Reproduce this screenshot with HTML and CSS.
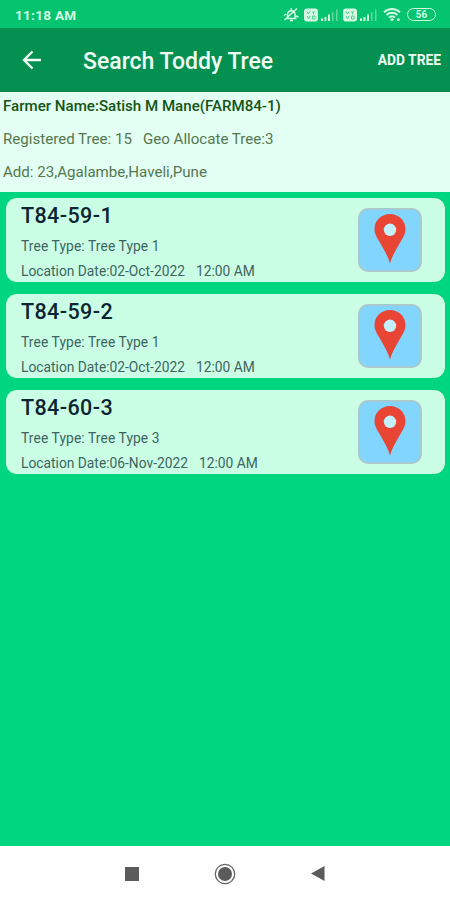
FILE: index.html
```html
<!DOCTYPE html>
<html lang="en">
<head>
  <meta charset="UTF-8">
  <title>Search Toddy Tree</title>
  <link rel="stylesheet" href="styles.css">
</head>
<body>
  <svg width="0" height="0" class="defs">
    <symbol id="pin" viewBox="0 0 32 50">
      <path fill="#e94535" d="M16 0C7.500 0 .5 6.600 .5 15c0 6 3.500 10 6.500 15.500 4 7 7 12 9 19 2-7 5-12 9-19 3-5.500 6.500-9.500 6.500-15.500C31.500 6.600 24.500 0 16 0z"/>
      <circle cx="16" cy="15.800" r="6.200" fill="#c4effc"/>
    </symbol>
    <symbol id="sim" viewBox="0 0 35 14">
      <rect x="0" y="0.500" width="14" height="13" rx="3" fill="#d5f9e2"/>
      <path d="M3 3.500l1.500 2.500L6 3.500M8 4h3M9.500 4v2.500M3 8l1.500 3L6 8M8.500 8v3h2.500V8z" fill="none" stroke="#4dd393" stroke-width="1"/>
      <path d="M17 10.500h2V13h-2zM20.500 9h2v4h-2zM24 6.500h2V13h-2z" fill="#d5f9e2"/>
      <path d="M28 4h1.500v9H28zM32 1.500h1.500V13H32z" fill="#5fdb9c"/>
    </symbol>
  </svg>

  <div class="statusbar">
    <span class="clock">11:18 AM</span>
    <div class="status-icons">
      <svg class="bell" width="16" height="15" viewBox="0 0 16 15" fill="none" stroke="#d5f9e2" stroke-width="1.500">
        <path d="M3 11.500h10.500M4.500 11V7a3.800 3.800 0 0 1 7.500 0v4M8.300 1v2M7 13.500h3M1.500 13L14 1.500M1 8.500l2-1.500M13 9l2.500 1"/>
      </svg>
      <svg class="sim" width="35" height="14"><use href="#sim"/></svg>
      <svg class="sim" width="35" height="14"><use href="#sim"/></svg>
      <svg class="wifi" width="18" height="15" viewBox="0 0 18 15" fill="none" stroke="#d5f9e2" stroke-width="2">
        <path d="M1 5.200a11.500 11.500 0 0 1 16 0M3.500 8a8 8 0 0 1 11 0M6 10.600a4.500 4.500 0 0 1 6 0"/>
        <path d="M9 14.500l-2-2.300a3 3 0 0 1 4 0zM14 11.500h2.500V14H14z" fill="#d5f9e2" stroke="none"/>
      </svg>
      <span class="battery">56</span>
    </div>
  </div>

  <div class="toolbar">
    <svg class="back" width="20" height="20" viewBox="0 0 20 20" fill="none" stroke="#effdf3" stroke-width="2.400">
      <path d="M19 10H2M10.500 1.500L2 10l8.500 8.500"/>
    </svg>
    <h1>Search Toddy Tree</h1>
    <span class="add">ADD TREE</span>
  </div>

  <div class="farmer">
    <p class="name">Farmer Name:Satish M Mane(FARM84-1)</p>
    <p class="count"><span>Registered Tree: 15</span><span>Geo Allocate Tree:3</span></p>
    <p class="address">Add: 23,Agalambe,Haveli,Pune</p>
  </div>

  <div class="list">
    <div class="card">
      <div class="info">
        <h2>T84-59-1</h2>
        <p class="type">Tree Type: Tree Type 1</p>
        <p class="date"><span>Location Date:02-Oct-2022</span><span>12:00 AM</span></p>
      </div>
      <div class="map"><svg width="32" height="50"><use href="#pin"/></svg></div>
    </div>
    <div class="card">
      <div class="info">
        <h2>T84-59-2</h2>
        <p class="type">Tree Type: Tree Type 1</p>
        <p class="date"><span>Location Date:02-Oct-2022</span><span>12:00 AM</span></p>
      </div>
      <div class="map"><svg width="32" height="50"><use href="#pin"/></svg></div>
    </div>
    <div class="card">
      <div class="info">
        <h2>T84-60-3</h2>
        <p class="type">Tree Type: Tree Type 3</p>
        <p class="date"><span>Location Date:06-Nov-2022</span><span>12:00 AM</span></p>
      </div>
      <div class="map"><svg width="32" height="50"><use href="#pin"/></svg></div>
    </div>
  </div>

  <div class="navbar">
    <svg width="14" height="14"><rect width="14" height="14" fill="#5b5b5b"/></svg>
    <svg width="22" height="22"><circle cx="11" cy="11" r="9.700" fill="none" stroke="#666" stroke-width="1.300"/><circle cx="11" cy="11" r="7" fill="#5b5b5b"/></svg>
    <svg width="14" height="15"><path d="M13.500 0v15L0 7.500z" fill="#5b5b5b"/></svg>
  </div>
</body>
</html>
```
FILE: styles.css
```css
* { box-sizing: border-box; margin: 0; padding: 0; }
body { width: 450px; height: 900px; display: flex; flex-direction: column; overflow: hidden; font-family: Roboto, sans-serif; background: #00d67f; }
svg { display: block; }
.defs { position: absolute; }

.statusbar { height: 28px; display: flex; align-items: center; justify-content: space-between; padding: 1px 14px 0 15px; background: #04c46f; color: #d5f9e2; }
.clock { font-size: 13.500px; font-weight: 700; line-height: 16px; letter-spacing: 0.300px; }
.status-icons { display: flex; align-items: center; }
.bell { margin-right: 5px; }
.sim { margin-right: 4px; }
.wifi { margin: 0 6px 0 1px; }
.battery { width: 29px; height: 13px; border: 1.500px solid #d5f9e2; border-radius: 7px; font-size: 10px; font-weight: 700; line-height: 11px; text-align: center; }

.toolbar { height: 64px; display: flex; align-items: center; padding: 0 9px 0 22px; background: #039050; border-bottom: 1px solid #067f43; color: #effdf3; }
.back { margin-right: 41px; }
h1 { flex: 1; font-size: 23px; font-weight: 500; line-height: 28px; padding-top: 4px; }
.add { font-size: 13.800px; font-weight: 700; line-height: 18px; padding-top: 1px; }

.farmer { height: 100px; padding: 4px 3px 0; background: #e3fff3; color: #55774f; font-size: 15.100px; }
.farmer p { height: 33px; line-height: 21px; white-space: nowrap; }
.farmer .name { color: #145414; font-size: 15.100px; font-weight: 500; }
.count span + span { margin-left: 11px; }

.list { flex: 1; padding: 5.600px 5px 0 6px; }
.card { height: 84px; margin-bottom: 12.200px; display: flex; justify-content: space-between; padding: 0 23px 0 15px; background: #caffe6; border-radius: 11px; }
.card h2 { margin-top: 5px; font-size: 21.500px; font-weight: 500; line-height: 26px; letter-spacing: 0.400px; color: #0c2530; }
.info p { font-size: 13.800px; line-height: 18px; color: #3d6460; white-space: nowrap; }
.info .type { margin-top: 8px; letter-spacing: 0.100px; }
.info .date { margin-top: 7px; }
.date span + span { margin-left: 11px; }
.map { width: 64px; height: 64px; margin-top: 10px; display: flex; justify-content: center; padding-top: 4px; background: #82d5fc; border: 2px solid #a9c9cf; border-radius: 10px; }

.navbar { height: 54px; display: flex; align-items: center; justify-content: center; gap: 75px; padding-top: 1px; background: #fefefe; }
```
